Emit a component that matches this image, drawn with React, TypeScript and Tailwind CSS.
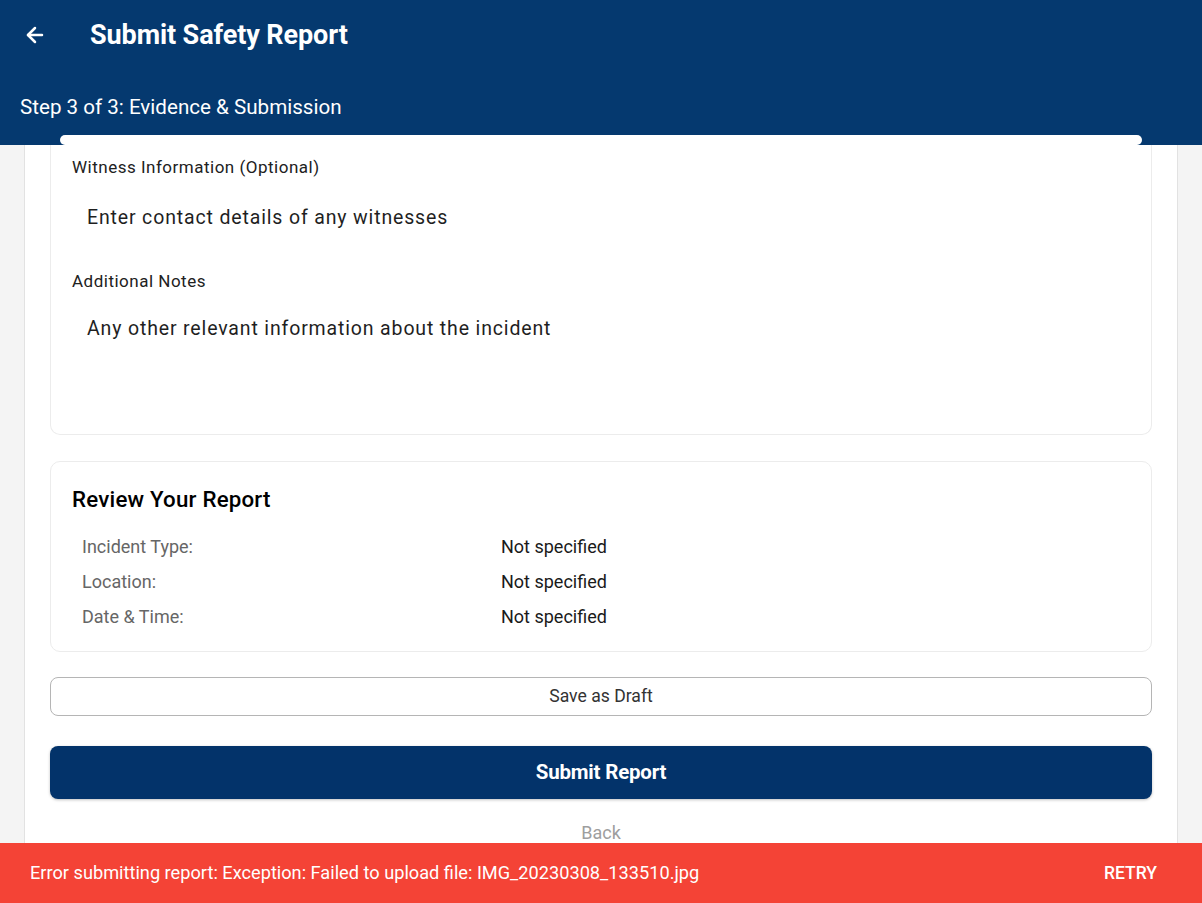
import { ArrowLeft } from "lucide-react";

const reviewRows = [
  { label: "Incident Type:", value: "Not specified" },
  { label: "Location:", value: "Not specified" },
  { label: "Date & Time:", value: "Not specified" },
];

export default function App() {
  return (
    <div className="relative flex h-[903px] w-full flex-col overflow-hidden bg-[#f4f4f4] font-['Roboto',sans-serif]">
      {/* app bar */}
      <header className="h-[145px] shrink-0 bg-[#05396f] text-white">
        <div className="flex h-[70px] items-center">
          <button className="ml-[22px] flex h-[26px] w-[26px] items-center justify-center" aria-label="Back">
            <ArrowLeft className="h-[24px] w-[24px]" strokeWidth={2.5} />
          </button>
          <h1 className="ml-[42px] text-[27px] font-bold tracking-[-0.1px]">Submit Safety Report</h1>
        </div>
        <p className="ml-5 mt-[24px] text-[20.6px] leading-[26px]">Step 3 of 3: Evidence &amp; Submission</p>
      </header>

      {/* progress indicator */}
      <div className="absolute left-[60px] top-[135px] h-[10px] w-[1082px] rounded-full bg-white" />

      <main className="flex flex-1 justify-center overflow-hidden">
        <div className="flex w-[1154px] flex-col border-x border-[#e2e2e2] bg-white px-[25px]">
          <section className="rounded-b-[10px] border-x border-b border-[#ececec] px-[21px] pb-[30px]">
            <label className="mt-[11px] block text-[17px] leading-[22px] tracking-[0.5px] text-[#212121]">
              Witness Information (Optional)
            </label>
            <div className="flex h-[80px] items-center px-[15px] text-[19.5px] tracking-[0.85px] text-[#1f1f1f]">
              Enter contact details of any witnesses
            </div>
            <label className="mt-[12px] block text-[17px] leading-[22px] tracking-[0.5px] text-[#212121]">
              Additional Notes
            </label>
            <div className="h-[112px] px-[15px] pt-[26px] text-[19.5px] leading-[22px] tracking-[0.85px] text-[#1f1f1f]">
              Any other relevant information about the incident
            </div>
          </section>

          <section className="mt-[26px] rounded-[10px] border border-[#ececec] px-[21px] pb-[17px] pt-[24px]">
            <h2 className="text-[22.3px] font-medium leading-[26px] tracking-[0.2px] text-black">Review Your Report</h2>
            <div className="mt-[17px] flex flex-col px-[10px]">
              {reviewRows.map((row) => (
                <div key={row.label} className="flex h-[35px] items-center text-[18px]">
                  <span className="w-[419px] text-[#666666]">{row.label}</span>
                  <span className="text-[#1a1a1a]">{row.value}</span>
                </div>
              ))}
            </div>
          </section>

          <button className="mt-[25px] h-[39px] w-full rounded-[8px] border border-[#b5b5b5] text-[17.6px] text-[#333333]">
            Save as Draft
          </button>

          <button className="mt-[30px] h-[53px] w-full rounded-[8px] bg-[#03336a] text-[20.5px] font-bold tracking-[-0.2px] text-white shadow-[0_1px_3px_rgba(0,0,0,0.25)]">
            Submit Report
          </button>

          <button className="mt-[20px] text-[18px] text-[#9e9e9e]">Back</button>
        </div>
      </main>

      {/* snackbar */}
      <div className="absolute bottom-0 left-0 flex h-[60px] w-full items-center justify-between bg-[#f44336] pl-[30px] pr-[45px] text-white">
        <span className="text-[18.2px]">Error submitting report: Exception: Failed to upload file: IMG_20230308_133510.jpg</span>
        <span className="text-[17.5px] font-medium">RETRY</span>
      </div>
    </div>
  );
}
